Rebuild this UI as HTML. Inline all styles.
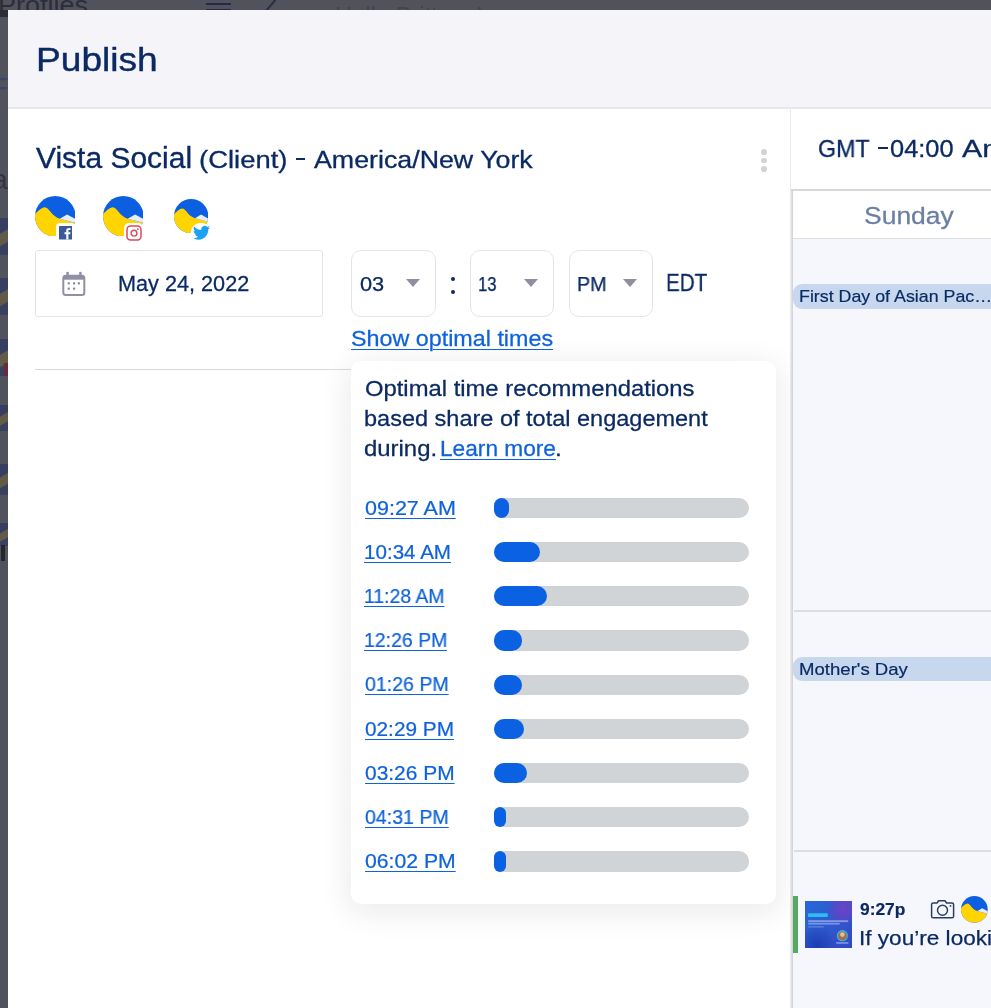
<!DOCTYPE html>
<html><head><meta charset="utf-8">
<style>
*{box-sizing:border-box;margin:0;padding:0}
html,body{width:991px;height:1008px;overflow:hidden;background:#52525c;font-family:"Liberation Sans",sans-serif;color:#0b2a63}
.abs{position:absolute}
.tx{position:absolute;white-space:nowrap;transform-origin:0 0;line-height:1;will-change:transform}
.u{text-decoration:underline;text-decoration-thickness:1.3px;text-underline-offset:2.6px}
#bgtxt{left:-2px;top:-7.5px;font-size:25.5px;line-height:1;color:#2d2d3a;white-space:nowrap;transform-origin:0 0;transform:scaleX(1.06)}
#bgham{left:205.5px;top:2.6px;width:25px;height:2.6px;background:#28284a}
#bgham2{left:205.5px;top:8.6px;width:25px;height:2px;background:#28284a}
#bgsl{left:270px;top:-2px;width:1.6px;height:14px;background:#2c2c40;transform:rotate(41deg)}
#bghello{left:335px;top:5px;font-size:23px;line-height:1;color:#44444f;white-space:nowrap;transform-origin:0 0;transform:scaleX(1.03)}
.bga{left:0;width:7.5px;height:37px;background:linear-gradient(150deg,#363e62 0 36%,#615b47 40% 66%,#3a4060 70%)}
#bgF{left:-9px;top:74px;font-size:28px;line-height:1;color:#3a4570}
#bga2{left:-8px;top:166px;font-size:28px;line-height:1;color:#34343f}
#bgred{left:4px;top:363px;width:3.5px;height:13px;background:#6b2a3c}
#bgblk{left:1px;top:545px;width:4px;height:16px;background:#25252d}
#bgdk{left:0;top:10px;width:7.5px;height:7px;background:#2c2c35}
#modal{left:8px;top:10px;width:983px;height:998px;background:#fff}
#hdr{left:8px;top:10px;width:983px;height:99px;background:#f4f4f9;border-bottom:2px solid #e7e8ed}
#vline{left:789.5px;top:108.5px;width:1.6px;height:899px;background:#ebebed}
.dot{width:5.6px;height:5.6px;border-radius:2.8px;background:#d3d3d3;left:761.1px}
#datebox{left:35px;top:250px;width:288px;height:67px;border:1px solid #e4e4e4;border-radius:3px;background:#fff}
.sel{top:250px;width:84px;height:67px;border:1px solid #e5e5e7;border-radius:10px;background:#fff}
.car{top:279px;width:0;height:0;border-left:7px solid transparent;border-right:7px solid transparent;border-top:8px solid #8f8fa3}
.cd{left:450.9px;width:4px;height:4px;border-radius:2px;background:#0b2a63}
#hr{left:35px;top:369px;width:316px;height:1.3px;background:#dadada}
#pop{left:351px;top:361px;width:425px;height:543px;background:#fff;border-radius:10px;box-shadow:0 6px 30px 3px rgba(20,20,40,.085)}
.bar{left:493.8px;width:255.1px;height:20.2px;border-radius:10.1px;background:#d0d4d7}
.bar i{display:block;height:20.2px;border-radius:10.1px;background:#0a61e1}
#cal{left:793px;top:190.9px;width:198px;height:819px;background:#f5f7fc;}
#calL{left:791px;top:189.4px;width:2px;height:819px;background:linear-gradient(to right,#e4e4e6,#d0d0d4)}
#calT{left:791px;top:189.4px;width:200px;height:1.5px;background:#d8d8da}
#calhd{left:793px;top:190.9px;width:198px;height:48.3px;background:#fff;border-bottom:1.5px solid #dedfe2}
.ev{left:793.4px;width:198px;height:24.8px;background:#c7d8ee;border-radius:9px 0 0 9px}
.rowl{left:793.5px;width:198px;height:1.5px;background:#dcdde0}
#gbar{left:793.2px;top:896px;width:4.8px;height:57.2px;background:#55ab63}
#thumb{left:805px;top:901px;width:47.2px;height:47.2px;overflow:hidden}

.dash{background:#0b2a63;border-radius:.3px}

</style></head><body>
<div class="abs" id="bgtxt">Profiles</div>
<div class="abs" id="bgham"></div><div class="abs" id="bgham2"></div><div class="abs" id="bgsl"></div>
<div class="abs" id="bghello">Hello Brittany!</div>
<div class="abs" id="bgF">F</div><div class="abs" id="bga2">a</div>
<div class="abs bga" style="top:218px"></div><div class="abs bga" style="top:278px"></div><div class="abs bga" style="top:339px"></div><div class="abs bga" style="top:405px;height:26px"></div><div class="abs bga" style="top:464px;height:31px"></div><div class="abs bga" style="top:523px;height:23px"></div>
<div class="abs" id="bgred"></div><div class="abs" id="bgblk"></div><div class="abs" id="bgdk"></div>
<div class="abs" id="modal"></div>
<div class="abs" id="hdr"></div>
<div class="abs" id="vline"></div>
<div class="abs dot" style="top:149.2px"></div><div class="abs dot" style="top:157.700px"></div><div class="abs dot" style="top:166.300px"></div>
<div class="abs" id="datebox"></div>
<div class="abs sel" style="left:351px;width:85px"></div><div class="abs car" style="left:405.500px"></div>
<div class="abs cd" style="top:277px"></div><div class="abs cd" style="top:290.100px"></div>
<div class="abs sel" style="left:470px"></div><div class="abs car" style="left:524.200px"></div>
<div class="abs sel" style="left:569px"></div><div class="abs car" style="left:622.900px"></div>
<div class="abs" id="hr"></div>
<div class="abs dash" style="left:296px;top:158.2px;width:9.4px;height:2.3px"></div>
<div class="abs dash" style="left:878.2px;top:146.8px;width:9.5px;height:2.4px"></div>
<div class="abs" id="pop"></div>
<div class="abs" id="cal"></div>
<div class="abs" id="calhd"></div>
<div class="abs" id="calL"></div><div class="abs" id="calT"></div>
<div class="abs ev" style="top:284.100px"></div>
<div class="abs rowl" style="top:610px"></div>
<div class="abs ev" style="top:656.500px"></div>
<div class="abs rowl" style="top:850.200px"></div>
<div class="abs" id="gbar"></div>
<div class="abs" id="thumb"><svg width="47.200" height="47.200" viewBox="0 0 47.200 47.200"><defs><linearGradient id="tg" x1="0" y1="0" x2="1" y2="1"><stop offset="0" stop-color="#2868d8"/><stop offset=".6" stop-color="#3156cc"/><stop offset="1" stop-color="#3348c4"/></linearGradient><radialGradient id="tp" cx="38" cy="8" r="17" gradientUnits="userSpaceOnUse"><stop offset="0" stop-color="#7a3ec2" stop-opacity=".8"/><stop offset=".55" stop-color="#6a40c4" stop-opacity=".6"/><stop offset="1" stop-color="#5a44c8" stop-opacity="0"/></radialGradient><radialGradient id="td" cx="12" cy="44" r="20" gradientUnits="userSpaceOnUse"><stop offset="0" stop-color="#1634ac" stop-opacity=".75"/><stop offset="1" stop-color="#1634ac" stop-opacity="0"/></radialGradient></defs><rect width="47.200" height="47.200" fill="url(#tg)"/><rect width="47.200" height="47.200" fill="url(#tp)"/><rect width="47.200" height="47.200" fill="url(#td)"/><rect x="2.900" y="12.200" width="20" height="3.700" rx="1.200" fill="#2bbcf0"/><rect x="3.200" y="19.200" width="40" height="1.900" fill="#c3d0f4" opacity=".55"/><rect x="3.200" y="21.800" width="31.500" height="1.800" fill="#c3d0f4" opacity=".5"/><rect x="3.200" y="25.300" width="15.500" height="1.200" fill="#a9bcf0" opacity=".45"/><circle cx="37.400" cy="34.700" r="5.600" fill="#3db4e2"/><circle cx="37.400" cy="34.900" r="4.500" fill="#9a7252"/><circle cx="37.400" cy="33.600" r="2.300" fill="#e8bc94"/><rect x="31.300" y="41.100" width="12.100" height="1.700" fill="#b4c4f2" opacity=".6"/></svg></div>
<div class="abs bar" style="top:497.90px"><i style="width:15.0px"></i></div>
<div class="abs bar" style="top:542.09px"><i style="width:46.0px"></i></div>
<div class="abs bar" style="top:586.28px"><i style="width:53.0px"></i></div>
<div class="abs bar" style="top:630.47px"><i style="width:28.0px"></i></div>
<div class="abs bar" style="top:674.66px"><i style="width:28.0px"></i></div>
<div class="abs bar" style="top:718.85px"><i style="width:30.0px"></i></div>
<div class="abs bar" style="top:763.04px"><i style="width:33.0px"></i></div>
<div class="abs bar" style="top:807.23px"><i style="width:12.4px"></i></div>
<div class="abs bar" style="top:851.42px"><i style="width:12.4px"></i></div>
<svg class="abs" style="left:34.7px;top:195.6px" width="40.6" height="40.6" viewBox="0 0 100 100"><defs><clipPath id="ca"><circle cx="50" cy="50" r="50"/></clipPath></defs><g clip-path="url(#ca)"><rect width="100" height="100" fill="#0b5fe0"/><path d="M0,44 C8,38 16,28 24,28 C35,28 40,50 61,56 L100,66 L100,100 L0,100 Z" fill="#ffd400"/><path d="M61,56 L79,45.5 L100,57 L100,66.5 Z" fill="#e6edf7"/></g></svg>
<svg class="abs" style="left:102.7px;top:195.6px" width="40.6" height="40.6" viewBox="0 0 100 100"><defs><clipPath id="cb"><circle cx="50" cy="50" r="50"/></clipPath></defs><g clip-path="url(#cb)"><rect width="100" height="100" fill="#0b5fe0"/><path d="M0,44 C8,38 16,28 24,28 C35,28 40,50 61,56 L100,66 L100,100 L0,100 Z" fill="#ffd400"/><path d="M61,56 L79,45.5 L100,57 L100,66.5 Z" fill="#e6edf7"/></g></svg>
<svg class="abs" style="left:173.7px;top:198.6px" width="34.3" height="34.3" viewBox="0 0 100 100"><defs><clipPath id="cc"><circle cx="50" cy="50" r="50"/></clipPath></defs><g clip-path="url(#cc)"><rect width="100" height="100" fill="#0b5fe0"/><path d="M0,44 C8,38 16,28 24,28 C35,28 40,50 61,56 L100,66 L100,100 L0,100 Z" fill="#ffd400"/><path d="M61,56 L79,45.5 L100,57 L100,66.5 Z" fill="#e6edf7"/></g></svg>
<svg class="abs" style="left:961.3px;top:895.8px" width="26.8" height="26.8" viewBox="0 0 100 100"><defs><clipPath id="cd"><circle cx="50" cy="50" r="50"/></clipPath></defs><g clip-path="url(#cd)"><rect width="100" height="100" fill="#0b5fe0"/><path d="M0,44 C8,38 16,28 24,28 C35,28 40,50 61,56 L100,66 L100,100 L0,100 Z" fill="#ffd400"/><path d="M61,56 L79,45.5 L100,57 L100,66.5 Z" fill="#e6edf7"/></g></svg>
<div class="abs" style="left:55.600px;top:223px;width:19px;height:19px;background:#fff;border-radius:4px"></div>
<svg class="abs" style="left:58.600px;top:226px" width="13.600" height="13.600" viewBox="0 0 24 24"><rect width="24" height="24" rx="1.500" fill="#3b5998"/><path d="M16.600 24v-9.300h3.100l.5-3.600h-3.600V8.800c0-1 .3-1.800 1.800-1.800h1.900V3.800c-.3 0-1.500-.1-2.800-.1-2.800 0-4.700 1.700-4.700 4.800v2.600H9.700v3.600h3.100V24z" fill="#fff"/></svg>
<div class="abs" style="left:123.600px;top:223px;width:19px;height:19px;background:#fff;border-radius:5px"></div>
<svg class="abs" style="left:125.600px;top:224.600px" width="16" height="16" viewBox="0 0 16 16"><rect x="1" y="1" width="14" height="14" rx="3.500" fill="#fff" stroke="#d8495f" stroke-width="1.500"/><circle cx="8" cy="8.200" r="2.900" fill="none" stroke="#d8495f" stroke-width="1.400"/><circle cx="11.900" cy="4.200" r=".9" fill="#d8495f"/></svg>
<div class="abs" style="left:191px;top:223px;width:20px;height:19px;background:#fff;border-radius:9px"></div>
<svg class="abs" style="left:192.600px;top:225px" width="17" height="15.500" viewBox="0 0 24 20"><path d="M23.950 2.570a10 10 0 0 1-2.825.775 4.958 4.958 0 0 0 2.163-2.723c-.951.555-2.005.959-3.127 1.184a4.920 4.920 0 0 0-8.384 4.482C7.690 6.095 4.067 4.130 1.640 1.162a4.822 4.822 0 0 0-.666 2.475c0 1.710.870 3.213 2.188 4.096a4.904 4.904 0 0 1-2.228-.616v.060a4.923 4.923 0 0 0 3.946 4.827 4.996 4.996 0 0 1-2.212.085 4.936 4.936 0 0 0 4.604 3.417 9.867 9.867 0 0 1-6.102 2.105c-.390 0-.779-.023-1.170-.067a13.995 13.995 0 0 0 7.557 2.209c9.053 0 13.998-7.496 13.998-13.985 0-.210 0-.420-.015-.630A9.935 9.935 0 0 0 24 2.590z" fill="#1da1f2"/></svg>
<svg class="abs" style="left:60px;top:270px" width="28" height="28" viewBox="0 0 28 28"><rect x="3.300" y="5.700" width="21" height="19.200" rx="2.500" fill="none" stroke="#8f8fa5" stroke-width="2"/><rect x="3.300" y="5.700" width="21" height="4" fill="#8f8fa5"/><rect x="6.400" y="1.900" width="2.400" height="5" fill="#8f8fa5"/><rect x="19.200" y="1.900" width="2.400" height="5" fill="#8f8fa5"/><g fill="#85858f"><rect x="7.700" y="12.300" width="2.100" height="2.100"/><rect x="13" y="12.300" width="2.100" height="2.100"/><rect x="17.800" y="12.300" width="2.100" height="2.100"/><rect x="7.700" y="17.600" width="2.100" height="2.100"/><rect x="13" y="17.600" width="2.100" height="2.100"/></g></svg>
<svg class="abs" style="left:928px;top:898px" width="30" height="24" viewBox="0 0 30 24"><path d="M5.200,5 H9 L10.600,2.800 H17 L18.600,5 H24 Q25.600,5 25.600,6.600 V18.200 Q25.600,19.800 24,19.800 H5.200 Q3.600,19.800 3.600,18.200 V6.600 Q3.600,5 5.200,5 Z" fill="none" stroke="#2b3d66" stroke-width="1.500" stroke-linejoin="round"/><circle cx="14.500" cy="12.300" r="5" fill="none" stroke="#2b3d66" stroke-width="1.500"/><circle cx="22.500" cy="7.900" r=".9" fill="#2b3d66"/></svg>
<div class="tx" id="title" style="left:36.26px;top:42.65px;font-size:33.5px;-webkit-text-stroke:0.40px;color:#0b2a63;transform:scaleX(1.1074)">Publish</div>
<div class="tx" id="vs" style="left:36.11px;top:143.50px;font-size:28.6px;-webkit-text-stroke:0.34px;color:#0b2a63;transform:scaleX(1.0485)">Vista Social</div>
<div class="tx" id="cl" style="left:198.74px;top:148.20px;font-size:24.2px;-webkit-text-stroke:0.29px;color:#0b2a63;transform:scaleX(1.1340)">(Client)</div>
<div class="tx" id="amer" style="left:314.40px;top:148.20px;font-size:24.2px;-webkit-text-stroke:0.29px;color:#0b2a63;transform:scaleX(1.1070)">America/New York</div>
<div class="tx" id="date" style="left:118.25px;top:274.40px;font-size:21.4px;-webkit-text-stroke:0.26px;color:#0b2a63;transform:scaleX(1.0127)">May 24, 2022</div>
<div class="tx" id="hh" style="left:359.99px;top:274.00px;font-size:20.6px;-webkit-text-stroke:0.25px;color:#0b2a63;transform:scaleX(1.0579)">03</div>
<div class="tx" id="mm" style="left:478.28px;top:274.00px;font-size:20.6px;-webkit-text-stroke:0.25px;color:#0b2a63;transform:scaleX(0.8067)">13</div>
<div class="tx" id="ap" style="left:576.78px;top:274.40px;font-size:20.6px;-webkit-text-stroke:0.25px;color:#0b2a63;transform:scaleX(0.9562)">PM</div>
<div class="tx" id="edt" style="left:666.35px;top:270.65px;font-size:24.7px;-webkit-text-stroke:0.30px;color:#0b2a63;transform:scaleX(0.8353)">EDT</div>
<div class="tx u" id="sot" style="left:350.51px;top:328.40px;font-size:22.2px;-webkit-text-stroke:0.27px;color:#0f62dc;transform:scaleX(1.0504)">Show optimal times</div>
<div class="tx" id="p1" style="left:364.64px;top:377.60px;font-size:22.2px;-webkit-text-stroke:0.27px;color:#0b2a63;transform:scaleX(1.0729)">Optimal time recommendations</div>
<div class="tx" id="p2" style="left:364.21px;top:407.60px;font-size:22.2px;-webkit-text-stroke:0.27px;color:#0b2a63;transform:scaleX(1.0595)">based share of total engagement</div>
<div class="tx" id="p3" style="left:364.48px;top:437.60px;font-size:22.2px;-webkit-text-stroke:0.27px;color:#0b2a63;transform:scaleX(1.0777)">during.</div>
<div class="tx u" id="p4" style="left:440.32px;top:437.60px;font-size:22.2px;-webkit-text-stroke:0.27px;color:#0f62dc;transform:scaleX(1.0218)">Learn more</div>
<div class="tx" id="p5" style="left:554.58px;top:437.60px;font-size:22.2px;-webkit-text-stroke:0.27px;color:#0b2a63;transform:scaleX(1.1040)">.</div>
<div class="tx" id="gmt" style="left:817.56px;top:137.35px;font-size:24.3px;-webkit-text-stroke:0.29px;color:#0b2a63;transform:scaleX(0.9545)">GMT</div>
<div class="tx" id="gmtt" style="left:889.95px;top:137.25px;font-size:24.3px;-webkit-text-stroke:0.29px;color:#0b2a63;transform:scaleX(1.0462)">04:00</div>
<div class="tx" id="gmta" style="left:961.68px;top:137.25px;font-size:24.3px;-webkit-text-stroke:0.29px;color:#0b2a63;transform:scaleX(1.2470)">Am</div>
<div class="tx" id="sun" style="left:863.83px;top:204.25px;font-size:24.3px;-webkit-text-stroke:0.29px;color:#6b7fa3;transform:scaleX(1.0894)">Sunday</div>
<div class="tx" id="ev1" style="left:798.80px;top:288.40px;font-size:17.0px;-webkit-text-stroke:0.20px;color:#0b2a63;transform:scaleX(1.0480)">First Day of Asian Pac…</div>
<div class="tx" id="ev2" style="left:799.33px;top:660.70px;font-size:17.0px;-webkit-text-stroke:0.20px;color:#0b2a63;transform:scaleX(1.0931)">Mother&#39;s Day</div>
<div class="tx" id="ptime" style="left:860.13px;top:900.90px;font-size:17.0px;-webkit-text-stroke:0.20px;font-weight:bold;color:#0b2a63;transform:scaleX(1.0225)">9:27p</div>
<div class="tx" id="ptxt" style="left:858.62px;top:926.90px;font-size:21.0px;-webkit-text-stroke:0.25px;color:#0b2a63;transform:scaleX(1.0755)">If you’re looki</div>
<div class="tx u" id="r0" style="left:364.61px;top:498.45px;font-size:20.3px;-webkit-text-stroke:0.24px;color:#0f62dc;transform:scaleX(1.0600)">09:27 AM</div>
<div class="tx u" id="r1" style="left:363.56px;top:541.64px;font-size:20.3px;-webkit-text-stroke:0.24px;color:#0f62dc;transform:scaleX(1.0156)">10:34 AM</div>
<div class="tx u" id="r2" style="left:364.11px;top:585.83px;font-size:20.3px;-webkit-text-stroke:0.24px;color:#0f62dc;transform:scaleX(0.9559)">11:28 AM</div>
<div class="tx u" id="r3" style="left:363.94px;top:630.02px;font-size:20.3px;-webkit-text-stroke:0.24px;color:#0f62dc;transform:scaleX(0.9591)">12:26 PM</div>
<div class="tx u" id="r4" style="left:365.16px;top:674.21px;font-size:20.3px;-webkit-text-stroke:0.24px;color:#0f62dc;transform:scaleX(0.9629)">01:26 PM</div>
<div class="tx u" id="r5" style="left:364.73px;top:719.40px;font-size:20.3px;-webkit-text-stroke:0.24px;color:#0f62dc;transform:scaleX(1.0247)">02:29 PM</div>
<div class="tx u" id="r6" style="left:364.73px;top:762.59px;font-size:20.3px;-webkit-text-stroke:0.24px;color:#0f62dc;transform:scaleX(1.0323)">03:26 PM</div>
<div class="tx u" id="r7" style="left:365.16px;top:806.78px;font-size:20.3px;-webkit-text-stroke:0.24px;color:#0f62dc;transform:scaleX(0.9629)">04:31 PM</div>
<div class="tx u" id="r8" style="left:364.69px;top:850.97px;font-size:20.3px;-webkit-text-stroke:0.24px;color:#0f62dc;transform:scaleX(1.0450)">06:02 PM</div>
</body></html>
